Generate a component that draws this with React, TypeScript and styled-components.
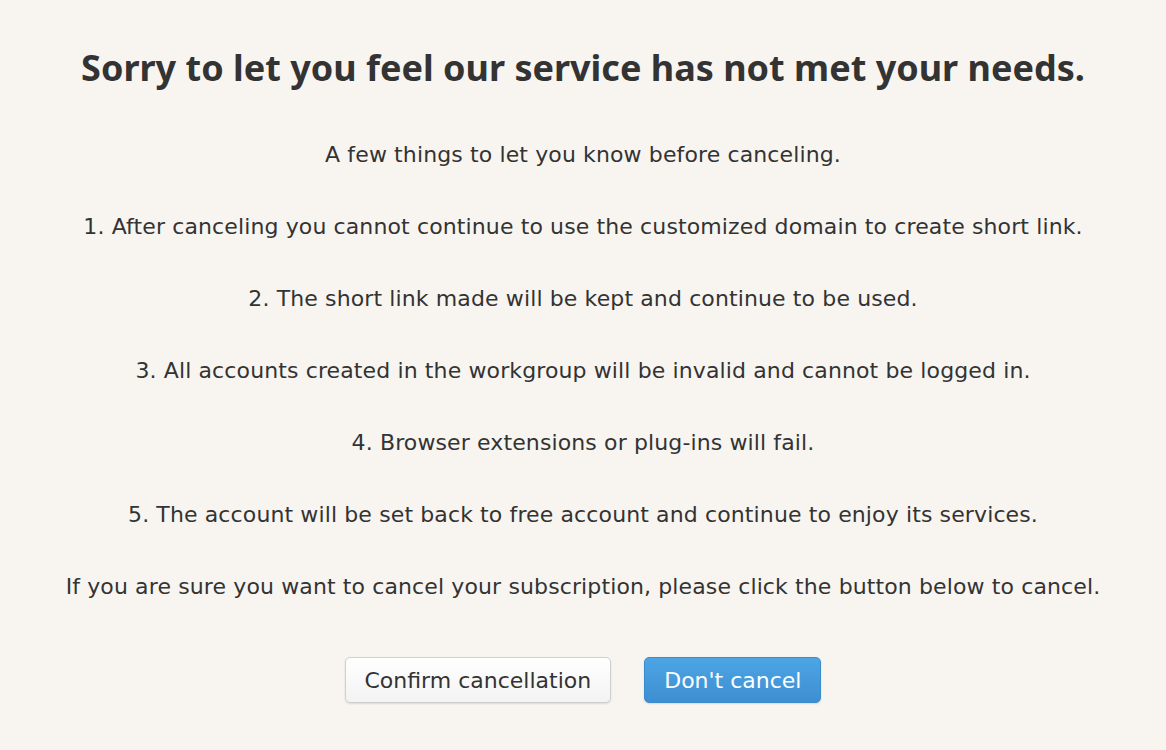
import React from 'react'
import styled, { createGlobalStyle } from 'styled-components'

const GlobalStyle = createGlobalStyle`
  html, body {
    margin: 0;
    padding: 0;
    background: #f8f5f1;
  }
  body {
    font-family: 'DejaVu Sans', 'Noto Sans', Arial, sans-serif;
    color: #333;
  }
`

const Page = styled.div`
  display: flex;
  flex-direction: column;
  align-items: center;
  padding-top: 44px;
  height: 750px;
  box-sizing: border-box;
`

const Title = styled.h1`
  margin: 0 0 49px;
  font-family: 'Noto Sans', 'DejaVu Sans', sans-serif;
  font-size: 36px;
  font-weight: bold;
  line-height: 48px;
  color: #333;
`

const Line = styled.p`
  margin: 0 0 44px;
  font-size: 22px;
  letter-spacing: 0.12px;
  line-height: 28px;
  color: #333;
`

const Actions = styled.div`
  display: flex;
  gap: 33px;
  margin-top: 12px;
`

const Button = styled.button<{ $primary?: boolean }>`
  height: 46px;
  padding: 0 19px;
  border-radius: 5px;
  font-family: inherit;
  font-size: 22px;
  cursor: pointer;
  border: 1px solid ${(p) => (p.$primary ? '#3a8ccc' : '#cfcfcf')};
  color: ${(p) => (p.$primary ? '#fff' : '#333')};
  background: ${(p) =>
    p.$primary
      ? 'linear-gradient(#4da5e5, #3d8fd1)'
      : 'linear-gradient(#ffffff, #f3f3f3)'};
  box-shadow: 0 1px 2px rgba(0, 0, 0, 0.12);
`

const items = [
  'A few things to let you know before canceling.',
  '1. After canceling you cannot continue to use the customized domain to create short link.',
  '2. The short link made will be kept and continue to be used.',
  '3. All accounts created in the workgroup will be invalid and cannot be logged in.',
  '4. Browser extensions or plug-ins will fail.',
  '5. The account will be set back to free account and continue to enjoy its services.',
  'If you are sure you want to cancel your subscription, please click the button below to cancel.',
]

const App = () => (
  <>
    <GlobalStyle />
    <Page>
      <Title>Sorry to let you feel our service has not met your needs.</Title>
      {items.map((t) => (
        <Line key={t}>{t}</Line>
      ))}
      <Actions>
        <Button>Confirm cancellation</Button>
        <Button $primary>Don't cancel</Button>
      </Actions>
    </Page>
  </>
)

export default App
